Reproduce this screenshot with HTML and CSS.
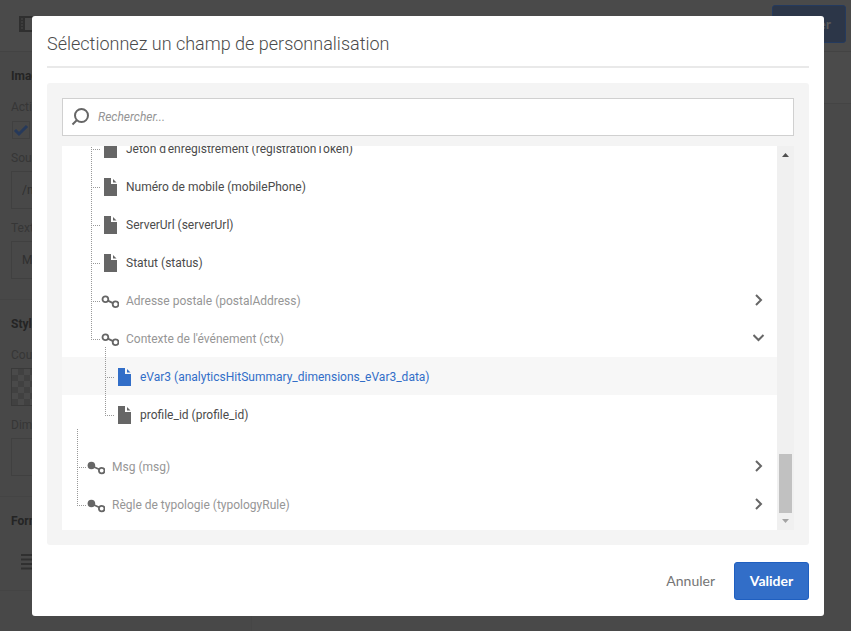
FILE: index.html
```html
<!DOCTYPE html>
<html lang="fr">
<head>
<meta charset="utf-8">
<meta name="viewport" content="width=device-width, initial-scale=1">
<title>Sélectionnez un champ de personnalisation</title>
<link rel="stylesheet" href="styles.css">
</head>
<body>
<svg class="sprite" aria-hidden="true">
  <symbol id="doc" viewBox="0 0 18 18"><path d="M3 0H10V6H16V18H3Z"/><path d="M12 1L15.500 4.500H12Z"/></symbol>
  <symbol id="link" viewBox="0 0 18 18"><g fill="none" stroke="currentColor" stroke-width="1.800"><circle cx="4.400" cy="7.300" r="2.900"/><circle cx="14.600" cy="12.300" r="2.900"/><path d="M6.900 8.600L12 11.100"/></g></symbol>
  <symbol id="link-full" viewBox="0 0 18 18"><circle cx="4.400" cy="7.500" r="3.800"/><g fill="none" stroke="currentColor" stroke-width="1.800"><circle cx="14.700" cy="12.600" r="2.800"/><path d="M6 8.500L12 11.300"/></g></symbol>
  <symbol id="right" viewBox="0 0 12 12"><path d="M3 1L8 6L3 11" fill="none" stroke="currentColor" stroke-width="2"/></symbol>
  <symbol id="down" viewBox="0 0 12 12"><path d="M0.500 3L5.500 8L10.500 3" fill="none" stroke="currentColor" stroke-width="2"/></symbol>
</svg>

<div class="page" inert>
  <header class="bar">
    <svg class="rail" viewBox="0 0 20 16"><path d="M0 0H20V16H0ZM6 2V14H18V2Z" fill-rule="evenodd"/><path class="rail-slots" d="M2 3H4M2 6H4M2 9H4M2 12H4"/></svg>
    <button class="create" type="button">Créer</button>
  </header>
  <div class="body">
    <aside class="side">
      <section>
        <h2>Image</h2>
        <label for="on">Activer</label>
        <span class="check"><input id="on" type="checkbox" checked><svg viewBox="0 0 18 18"><path d="M3 9L7 13L15 5"/></svg></span>
        <label for="src">Source</label>
        <input class="field" id="src" type="text" value="/nl">
        <label for="alt">Texte</label>
        <input class="field" id="alt" type="text" value="Mon">
      </section>
      <section>
        <h2>Style</h2>
        <label for="color">Couleur</label>
        <button class="swatch" id="color" type="button"></button>
        <label for="size">Dimensions</label>
        <input class="field" id="size" type="text">
      </section>
      <section>
        <h2>Format</h2>
        <svg class="lines" viewBox="0 0 20 16"><path d="M0 1H20M0 5.500H20M0 10H20M0 14.500H20"/></svg>
      </section>
    </aside>
    <main class="canvas"><div class="tools"></div></main>
  </div>
</div>

<div class="modal" role="dialog" aria-modal="true" aria-labelledby="title">
  <h1 id="title">Sélectionnez un champ de personnalisation</h1>
  <div class="panel">
    <div class="search">
      <svg viewBox="0 0 20 20"><circle cx="11.500" cy="8.500" r="6.500"/><path d="M7 13L2.500 17.500"/></svg>
      <input type="text" placeholder="Rechercher..." aria-label="Rechercher">
    </div>
    <div class="list">
      <div class="tree">
        <ul class="level two">
          <li><button class="row" type="button"><svg><use href="#doc"/></svg><span>Jeton d'enregistrement (registrationToken)</span></button></li>
          <li><button class="row" type="button"><svg><use href="#doc"/></svg><span>Numéro de mobile (mobilePhone)</span></button></li>
          <li><button class="row" type="button"><svg><use href="#doc"/></svg><span>ServerUrl (serverUrl)</span></button></li>
          <li><button class="row" type="button"><svg><use href="#doc"/></svg><span>Statut (status)</span></button></li>
          <li><button class="row group" type="button"><svg><use href="#link"/></svg><span>Adresse postale (postalAddress)</span><svg class="chev"><use href="#right"/></svg></button></li>
          <li><button class="row group" type="button" aria-expanded="true"><svg><use href="#link"/></svg><span>Contexte de l'événement (ctx)</span><svg class="chev"><use href="#down"/></svg></button>
            <ul class="level three">
              <li><button class="row selected" type="button"><svg><use href="#doc"/></svg><span>eVar3 (analyticsHitSummary_dimensions_eVar3_data)</span></button></li>
              <li><button class="row" type="button"><svg><use href="#doc"/></svg><span>profile_id (profile_id)</span></button></li>
            </ul>
          </li>
        </ul>
        <ul class="level one">
          <li><button class="row group" type="button"><svg><use href="#link-full"/></svg><span>Msg (msg)</span><svg class="chev"><use href="#right"/></svg></button></li>
          <li><button class="row group" type="button"><svg><use href="#link-full"/></svg><span>Règle de typologie (typologyRule)</span><svg class="chev"><use href="#right"/></svg></button></li>
        </ul>
      </div>
      <div class="scroll" aria-hidden="true">
        <svg viewBox="0 0 17 17"><path d="M5 11H12L8.500 7Z"/></svg>
        <div class="thumb"></div>
        <svg class="end" viewBox="0 0 17 17"><path d="M5 6H12L8.500 10Z"/></svg>
      </div>
    </div>
  </div>
  <footer>
    <button class="cancel" type="button">Annuler</button>
    <button class="ok" type="button">Valider</button>
  </footer>
</div>
</body>
</html>
```
FILE: styles.css
```css
* { box-sizing: border-box; }
body, h1, h2, ul { margin: 0; padding: 0; }
body { height: 100vh; overflow: hidden; font: 12px/18px Roboto, "Noto Sans", sans-serif; color: #4b4b4b; background: #494949; }
button, input { font: inherit; color: inherit; }
button { border: 0; background: none; padding: 0; }
ul { list-style: none; }
svg { fill: currentColor; flex: none; display: block; }
.sprite { position: absolute; width: 0; height: 0; }

.page { height: 100%; display: flex; flex-direction: column; color: #2f2f2f; }
.bar { height: 52px; padding: 5px 5px 8px 19px; border-bottom: 1px solid #434343; display: flex; justify-content: space-between; align-items: center; background: #4a4a4a; }
.rail { width: 20px; height: 16px; fill: #2f2f2f; }
.rail-slots { stroke: #4a4a4a; stroke-width: 1; }
.create { width: 74px; height: 38px; padding-right: 14px; text-align: right; border: 1px solid #243a5e; border-radius: 3px; background: #2c3648; color: #5a5a5a; font: 700 14px/18px Lato, sans-serif; }
.body { flex: 1; display: flex; min-height: 0; }
.side { width: 252px; border-right: 1px solid #464646; background: #484848; }
.side section { padding: 15px 11px 20px; border-bottom: 1px solid #444; }
.side h2 { font-size: 12px; line-height: 18px; margin-bottom: 13px; color: #242424; }
.side label { display: block; color: #363636; height: 18px; }
.check { display: block; width: 20px; height: 20px; margin: 5px 0 8px; position: relative; }
.check input { appearance: none; display: block; width: 18px; height: 18px; margin: 0 1px; border: 1px solid #404040; }
.check svg { position: absolute; top: 0; left: 1px; width: 18px; height: 18px; fill: none; stroke: #26395a; stroke-width: 3; }
.field, .swatch { display: block; width: 100%; height: 38px; margin: 4px 0 10px; padding: 0 10px; border: 1px solid #404040; background: none; }
.side section > :last-child { margin-bottom: 0; }
.swatch { border-color: #3a3a3a; background: repeating-conic-gradient(#414141 0 25%, #4a4a4a 0 50%) 0 0 / 12px 12px; }
.lines { width: 20px; height: 16px; margin: 24px 10px 0; fill: none; stroke: #303030; stroke-width: 2; }
.canvas { flex: 1; }
.tools { height: 52px; border-bottom: 1px solid #444; background: #4b4b4b; }

.modal { position: fixed; inset: 16px 27px 15px 32px; padding: 0 15px 16px; display: flex; flex-direction: column; background: #fff; border-radius: 3px; }
h1 { height: 52px; padding-top: 16px; margin-bottom: 15px; border-bottom: 2px solid #e9e9e9; font-size: 18px; line-height: 24px; font-weight: 300; flex: none; }
.panel { flex: 1; min-height: 0; padding: 15px; display: flex; flex-direction: column; gap: 10px; background: #f4f4f4; border-radius: 3px; }
.search { height: 38px; flex: none; display: flex; align-items: center; gap: 8px; padding-left: 7px; border: 1px solid #d0d0d0; background: #fff; }
.search svg { width: 20px; height: 20px; fill: none; stroke: #666; stroke-width: 2; }
.search input { flex: 1; min-width: 0; height: 100%; padding: 0; border: 0; outline: 0; background: none; font-style: italic; }
.search input::placeholder { color: #959595; opacity: 1; }
.list { flex: 1; min-height: 0; display: flex; background: #fff; }
.tree { flex: 1; min-width: 0; overflow: hidden; padding-bottom: 7px; display: flex; flex-direction: column; justify-content: flex-end; gap: 14px; }
.level { flex: none; --indent: 25px; }
.two { --indent: 39px; }
.three { --indent: 53px; }
.level > li { position: relative; }
.level > li::before { content: ""; position: absolute; left: calc(var(--indent) - 10px); top: -18px; width: 8px; height: 38px; border: dotted #999; border-width: 0 0 1px 1px; pointer-events: none; }
.three > li:first-child::before { top: -10px; height: 30px; }
.row { width: 100%; height: 38px; padding: 0 12px 0 var(--indent); display: flex; align-items: center; gap: 7px; text-align: left; white-space: nowrap; }
.row span { flex: 1; padding-top: 1px; }
.row svg { width: 18px; height: 18px; color: #666; margin-top: 2px; }
.row .chev { width: 12px; height: 12px; margin: 0; }
.group { color: #969696; }
.selected, .selected svg { color: #326ec8; }
.selected { background: #f7f7f7; }
.scroll { width: 17px; display: flex; flex-direction: column; background: #f0f0f0; }
.scroll svg { width: 17px; height: 17px; fill: #505050; }
.scroll .end { fill: #a3a3a3; }
.thumb { height: 59px; margin: auto 2px 0; background: #c1c1c1; }
footer { margin-top: 17px; flex: none; display: flex; justify-content: flex-end; gap: 19px; font: 14px/18px Lato, sans-serif; }
.cancel { color: #757575; }
.ok { width: 75px; height: 38px; border: 1px solid #1f5fc0; border-radius: 3px; background: #326ec8; color: #fff; font-weight: 700; }
```
